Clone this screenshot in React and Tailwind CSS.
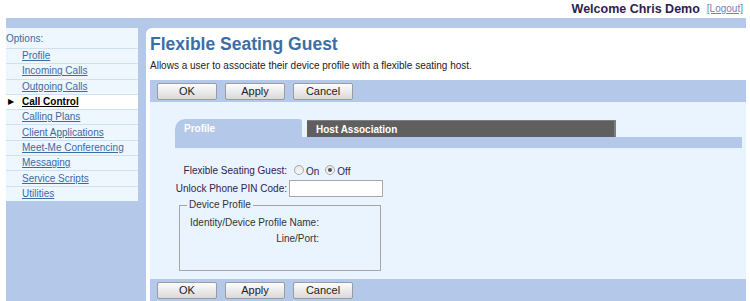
import React from "react";

const Btn = ({ children }) => (
  <button className="w-[60px] h-[17px] border border-[#9c9c9c] rounded-[2px] bg-linear-to-b from-[#fdfdfd] to-[#d9d9d9] text-[11px] leading-none text-[#222]">
    {children}
  </button>
);

const ButtonBar = () => (
  <div className="h-[22px] shrink-0 bg-[#b4c9ea] flex items-center gap-[8px] pl-[7px]">
    <Btn>OK</Btn>
    <Btn>Apply</Btn>
    <Btn>Cancel</Btn>
  </div>
);

const items = [
  "Profile",
  "Incoming Calls",
  "Outgoing Calls",
  "Call Control",
  "Calling Plans",
  "Client Applications",
  "Meet-Me Conferencing",
  "Messaging",
  "Service Scripts",
  "Utilities",
];

const Radio = ({ checked }) => (
  <span className="w-[10px] h-[10px] rounded-full border border-[#a8a8a8] bg-linear-to-b from-[#e6e6e6] to-[#fafafa] flex items-center justify-center">
    {checked && <span className="w-[4px] h-[4px] rounded-full bg-[#505050]" />}
  </span>
);

export default function App() {
  return (
    <div className="w-[750px] h-[301px] overflow-hidden bg-white font-['Liberation_Sans',Arial,sans-serif] text-[#222]">
      <div className="h-[18px] flex items-center justify-end pr-[7px]">
        <span className="text-[12.5px] font-bold text-[#2f1d4f] leading-none">Welcome Chris Demo</span>
        <a className="ml-[7px] text-[10px] text-[#6b86b3] underline leading-none">[Logout]</a>
      </div>
      <div className="ml-[6px] mr-[4px] h-[283px] bg-[#b4c9ea] pt-[10px] flex gap-[8px]">
        <div className="w-[132px] flex flex-col self-start">
          <div className="h-[20px] bg-[#eef6fe] flex items-center text-[10px] text-[#3d6aa3]">Options:</div>
          {items.map((it) => {
            const sel = it === "Call Control";
            return (
              <div
                key={it}
                className={
                  "h-[15.3px] border-t border-[#cfe0f4] flex items-center text-[10px] " +
                  (sel ? "bg-white" : "bg-[#eef6fe]")
                }
              >
                <span className="w-[16px] pl-[2px] text-[8px] leading-none text-black">{sel ? "▶" : ""}</span>
                <a
                  className={
                    "underline leading-none " + (sel ? "text-black font-bold" : "text-[#3d6aa3]")
                  }
                >
                  {it}
                </a>
              </div>
            );
          })}
        </div>
        <div className="flex-1 min-h-0 bg-white rounded-tl-[6px] pl-[4px] flex flex-col">
          <h1 className="pt-[5px] text-[17.5px] font-bold text-[#3c6ea6] leading-[22px]">Flexible Seating Guest</h1>
          <p className="mt-[4px] text-[10px] leading-[14px] text-[#222]">
            Allows a user to associate their device profile with a flexible seating host.
          </p>
          <div className="mt-[7px]">
            <ButtonBar />
          </div>
          <div className="h-[177px] shrink-0 bg-[#e9f4fe] pt-[17px] flex flex-col">
            <div className="ml-[25px] mr-[4px]">
              <div className="flex items-end h-[18px]">
                <div className="w-[127px] h-[18px] bg-[#b4c9ea] rounded-tl-[10px] rounded-tr-[3px] flex items-center pl-[9px] text-[10px] font-bold text-white">
                  Profile
                </div>
                <div className="ml-[5px] w-[309px] h-[17px] bg-[#5f5f5f] border-t border-r-2 border-[#7e7e7e] flex items-center pl-[9px] text-[10px] font-bold text-white">
                  Host Association
                </div>
              </div>
              <div className="h-[11px] bg-[#b4c9ea]" />
            </div>
            <div className="mt-[15px] flex items-center h-[14px]">
              <div className="w-[137px] text-right text-[10px] text-[#33224d]">Flexible Seating Guest:</div>
              <div className="ml-[7px] flex items-center text-[10px] text-[#33224d]">
                <Radio />
                <span className="ml-[2px] mt-[2px]">On</span>
                <span className="ml-[6px]">
                  <Radio checked />
                </span>
                <span className="ml-[2px] mt-[2px]">Off</span>
              </div>
            </div>
            <div className="mt-[3px] flex items-center h-[17px]">
              <div className="w-[137px] text-right text-[10px] text-[#33224d]">Unlock Phone PIN Code:</div>
              <div className="ml-[2px] w-[94px] h-[17px] bg-white border border-[#a9a9a9]" />
            </div>
            <fieldset className="mt-[2px] ml-[29px] w-[202px] h-[72px] border border-[#a6a6a6] pl-[8px] pt-0">
              <legend className="px-[2px] -ml-[1px] text-[10px] leading-[12px] text-[#333]">Device Profile</legend>
              <div className="mt-[5px] ml-[2px] w-fit flex flex-col items-end whitespace-nowrap text-[10px] leading-[14px] text-[#333]">
                <div>Identity/Device Profile Name:</div>
                <div className="mt-[2px]">Line/Port:</div>
              </div>
            </fieldset>
          </div>
          <ButtonBar />
        </div>
      </div>
    </div>
  );
}
